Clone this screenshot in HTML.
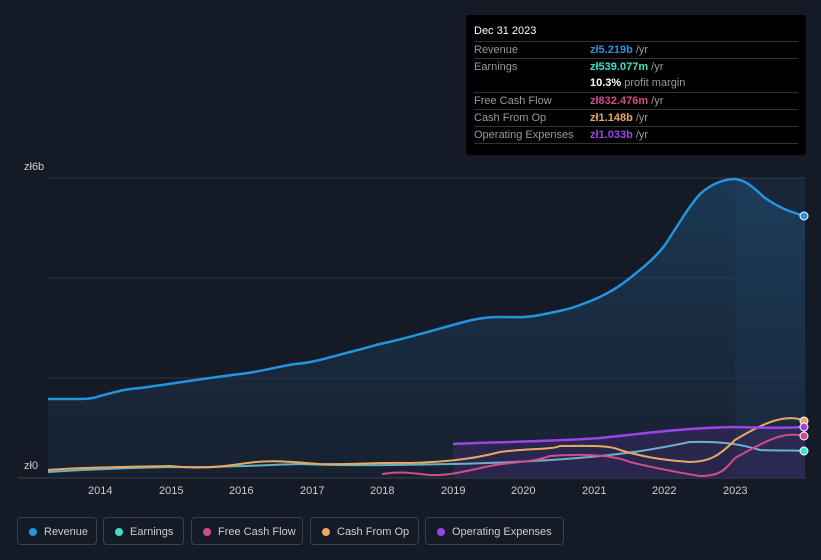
<!DOCTYPE html>
<html><head><style>
body{margin:0;width:821px;height:560px;background:#151b26;font-family:"Liberation Sans",sans-serif;overflow:hidden;position:relative}
.tt{position:absolute;left:466px;top:15px;width:340px;height:140px;background:#000;border-radius:3px;font-size:11px;color:#999}
.tt .h{position:absolute;left:8px;top:10px;color:#fff;font-size:11px}
.row{position:absolute;left:8px;width:324px;border-top:1px solid #333;height:17px;line-height:17px}
.row span{position:absolute;left:116px}
.leg{position:absolute;top:517px;height:28px;border:1px solid #3a4150;border-radius:4px;color:#ccc;font-size:11px;line-height:28px;box-sizing:border-box;padding-left:26px}
.leg i{position:absolute;left:11px;top:10px;width:8px;height:8px;border-radius:50%}
.ax{position:absolute;color:#ccc;font-size:11px}
</style></head><body>
<svg width="821" height="560" style="position:absolute;left:0;top:0">
<defs><linearGradient id="g" x1="0" y1="0" x2="0" y2="1"><stop offset="0" stop-color="#1e4d74" stop-opacity=".6"/><stop offset="1" stop-color="#1a2a40" stop-opacity=".4"/></linearGradient></defs>
<rect x="735" y="178" width="70" height="300" fill="#1a2e44" opacity=".6"/>
<line x1="48" y1="178" x2="805" y2="178" stroke="#2e3543"/>
<line x1="48" y1="278" x2="805" y2="278" stroke="#2e3543"/>
<line x1="48" y1="378" x2="805" y2="378" stroke="#2e3543"/>
<line x1="18" y1="478" x2="805" y2="478" stroke="#3a4150"/>
<path d="M48,399 L80,399 C90,399 95,398 100,396 C115,392 125,389 140,388 C170,384 200,379 240,374 C260,372 280,366 295,364 C310,363 320,360 350,352 C370,347 375,345 380,344 C400,340 420,334 460,323 C475,319 485,317 500,317 C515,317 525,318 540,315 C560,311 570,309 580,305 C600,298 615,290 630,278 C645,266 655,258 665,245 C680,222 690,205 700,194 C712,183 725,179 735,179 C745,180 752,186 765,198 C780,208 790,212 805,216 L805,478 L48,478Z" fill="url(#g)"/>
<path d="M453,444 C500,442 560,441 600,438 C640,434 680,428 735,427 C770,428 790,428 805,427 L805,478 L453,478Z" fill="#3b2a6a" opacity=".5"/>
<path d="M48,399 L80,399 C90,399 95,398 100,396 C115,392 125,389 140,388 C170,384 200,379 240,374 C260,372 280,366 295,364 C310,363 320,360 350,352 C370,347 375,345 380,344 C400,340 420,334 460,323 C475,319 485,317 500,317 C515,317 525,318 540,315 C560,311 570,309 580,305 C600,298 615,290 630,278 C645,266 655,258 665,245 C680,222 690,205 700,194 C712,183 725,179 735,179 C745,180 752,186 765,198 C780,208 790,212 805,216" fill="none" stroke="#2394e0" stroke-width="2.5"/>
<path d="M48,472 C80,470 120,468 170,467 C220,468 260,465 300,464 C350,466 400,465 450,464 C500,463 550,461 600,456 C640,452 660,448 690,442 C720,441 740,444 760,450 C780,451 795,450 805,451" fill="none" stroke="#7fd3e0" stroke-width="2" opacity=".8"/>
<path d="M48,470 C80,467 130,467 170,466 C200,469 220,467 240,464 C270,459 290,462 320,464 C350,465 380,462 410,463 C440,462 470,460 500,452 C530,448 550,450 560,446 C590,446 610,445 620,450 C640,456 660,460 690,462 C710,462 720,455 735,440 C760,425 785,412 805,421" fill="none" stroke="#e8a864" stroke-width="2"/>
<path d="M382,474 C400,471 410,473 430,475 C450,476 470,470 490,466 C510,462 530,463 550,456 C580,454 610,454 630,462 C650,467 670,471 700,476 C720,476 725,470 735,458 C760,445 780,430 805,436" fill="none" stroke="#d04b8a" stroke-width="2"/>
<path d="M453,444 C500,442 560,441 600,438 C640,434 680,428 735,427 C770,428 790,428 805,427" fill="none" stroke="#9b44e8" stroke-width="2.5"/>
<circle cx="804" cy="216" r="4" fill="#2394e0" stroke="#fff"/>
<circle cx="804" cy="421" r="4" fill="#e8a864" stroke="#fff"/>
<circle cx="804" cy="427" r="4" fill="#9b44e8" stroke="#fff"/>
<circle cx="804" cy="436" r="4" fill="#d04b8a" stroke="#fff"/>
<circle cx="804" cy="451" r="4" fill="#40e0c8" stroke="#fff"/>
</svg>
<div class="ax" style="left:24px;top:161px">zł6b</div>
<div class="ax" style="left:24px;top:460px">zł0</div>
<div class="ax" style="left:88px;top:485px">2014</div>
<div class="ax" style="left:159px;top:485px">2015</div>
<div class="ax" style="left:229px;top:485px">2016</div>
<div class="ax" style="left:300px;top:485px">2017</div>
<div class="ax" style="left:370px;top:485px">2018</div>
<div class="ax" style="left:441px;top:485px">2019</div>
<div class="ax" style="left:511px;top:485px">2020</div>
<div class="ax" style="left:582px;top:485px">2021</div>
<div class="ax" style="left:652px;top:485px">2022</div>
<div class="ax" style="left:723px;top:485px">2023</div>
<div class="tt">
<div class="h">Dec 31 2023</div>
<div class="row" style="top:26px">Revenue<span><b style="color:#2394e0;font-weight:bold">zł5.219b</b> /yr</span></div>
<div class="row" style="top:43px">Earnings<span><b style="color:#40e0c8">zł539.077m</b> /yr</span></div>
<div class="row" style="top:60px;border:0"><span><b style="color:#fff">10.3%</b> profit margin</span></div>
<div class="row" style="top:77px">Free Cash Flow<span><b style="color:#d04b8a">zł832.476m</b> /yr</span></div>
<div class="row" style="top:94px">Cash From Op<span><b style="color:#e8a864">zł1.148b</b> /yr</span></div>
<div class="row" style="top:111px">Operating Expenses<span><b style="color:#9b44e8">zł1.033b</b> /yr</span></div>
<div class="row" style="top:128px;height:0"></div>
</div>
<div class="leg" style="left:17px;width:80px"><i style="background:#2394e0"></i>Revenue</div>
<div class="leg" style="left:103px;width:81px"><i style="background:#40e0c8"></i>Earnings</div>
<div class="leg" style="left:191px;width:112px"><i style="background:#d04b8a"></i>Free Cash Flow</div>
<div class="leg" style="left:310px;width:109px"><i style="background:#e8a864"></i>Cash From Op</div>
<div class="leg" style="left:425px;width:139px"><i style="background:#9b44e8"></i>Operating Expenses</div>
</body></html>
